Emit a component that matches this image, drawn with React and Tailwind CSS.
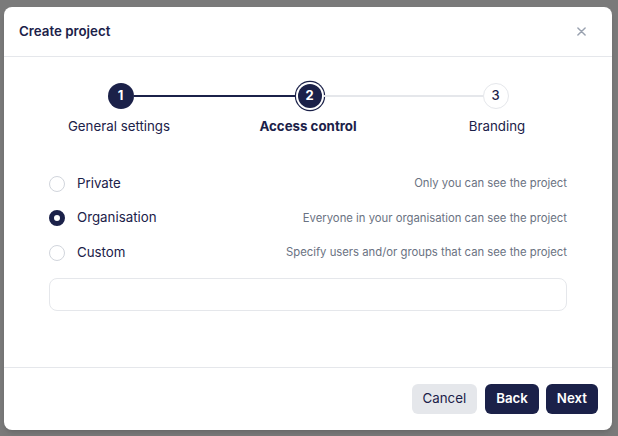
import React, { useState } from 'react'

const steps = [
  { n: 1, label: 'General settings', state: 'done' },
  { n: 2, label: 'Access control', state: 'current' },
  { n: 3, label: 'Branding', state: 'todo' },
]

const options = [
  { id: 'private', label: 'Private', hint: 'Only you can see the project' },
  { id: 'org', label: 'Organisation', hint: 'Everyone in your organisation can see the project' },
  { id: 'custom', label: 'Custom', hint: 'Specify users and/or groups that can see the project' },
]

const StepCircle = ({ step }) => {
  if (step.state === 'current') {
    return (
      <div className="w-[24px] h-[24px] rounded-full bg-[#1b2149] text-white text-[13px] font-bold flex items-center justify-center shadow-[0_0_0_2px_#ffffff,0_0_0_3.2px_#1b2149]">
        {step.n}
      </div>
    )
  }
  if (step.state === 'done') {
    return (
      <div className="w-[26px] h-[26px] rounded-full bg-[#1b2149] text-white text-[13px] font-bold flex items-center justify-center">
        {step.n}
      </div>
    )
  }
  return (
    <div className="w-[26px] h-[26px] rounded-full bg-white border border-gray-200 text-[#1b2149] text-[13px] font-medium flex items-center justify-center">
      {step.n}
    </div>
  )
}

const App = () => {
  const [access, setAccess] = useState('org')

  return (
    <div className="w-[618px] h-[436px] bg-[#7a7a7a] pt-[7px] pl-[4px]" style={{ fontFamily: 'Inter, "Noto Sans", sans-serif' }}>
      <div className="w-[608px] h-[423px] bg-white rounded-lg flex flex-col shadow-md">
        {/* Header */}
        <div className="h-[50px] pl-[15px] pr-[26px] flex items-center justify-between border-b border-gray-200">
          <h1 className="text-[13.3px] font-semibold text-[#1b2149]">Create project</h1>
          <button className="text-gray-400">
            <svg width="9" height="9" viewBox="0 0 10 10" fill="none" stroke="currentColor" strokeWidth="1.6" strokeLinecap="round">
              <path d="M1 1l8 8M9 1l-8 8" />
            </svg>
          </button>
        </div>

        {/* Body */}
        <div className="flex-1 px-[45px] pt-[26px]">
          {/* Stepper */}
          <div className="flex items-center justify-center">
            <StepCircle step={steps[0]} />
            <div className="w-[162px] h-[2px] bg-[#1b2149]" />
            <div className="mx-[2px]"><StepCircle step={steps[1]} /></div>
            <div className="w-[159px] h-[2px] bg-gray-200" />
            <StepCircle step={steps[2]} />
          </div>
          <div className="grid grid-cols-[189px_189px_189px] justify-center mt-[8px]">
            {steps.map(s => (
              <div key={s.n} className={`text-center text-[13.3px] text-[#1b2149] ${s.state === 'current' ? 'font-bold' : ''}`}>
                {s.label}
              </div>
            ))}
          </div>

          {/* Access options */}
          <div className="mt-[37px] space-y-[14.5px]">
            {options.map(opt => (
              <label key={opt.id} className="flex items-center justify-between h-[20px] cursor-pointer" onClick={() => setAccess(opt.id)}>
                <div className="flex items-center gap-[12px]">
                  {access === opt.id ? (
                    <span className="w-[16px] h-[16px] rounded-full border-[5px] border-[#1b2149] bg-white" />
                  ) : (
                    <span className="w-[16px] h-[16px] rounded-full border border-gray-300 bg-white" />
                  )}
                  <span className="text-[13.3px] text-[#1b2149]">{opt.label}</span>
                </div>
                <span className="text-[11.3px] text-gray-500">{opt.hint}</span>
              </label>
            ))}
          </div>

          <input
            type="text"
            className="mt-[15px] w-full h-[33px] border border-gray-200 rounded-lg px-3 text-[13px] outline-none"
          />
        </div>

        {/* Footer */}
        <div className="h-[63px] border-t border-gray-200 flex items-center justify-end gap-[7px] px-[14px] pb-[1px]">
          <button className="h-[30px] px-[11px] mr-[1px] rounded-md bg-gray-200 text-[13.3px] text-[#1b2149]">Cancel</button>
          <button className="h-[30px] px-[11px] rounded-md bg-[#1b2149] text-[13.3px] font-semibold text-white">Back</button>
          <button className="h-[30px] px-[11px] rounded-md bg-[#1b2149] text-[13.3px] font-semibold text-white">Next</button>
        </div>
      </div>
    </div>
  )
}

export default App
